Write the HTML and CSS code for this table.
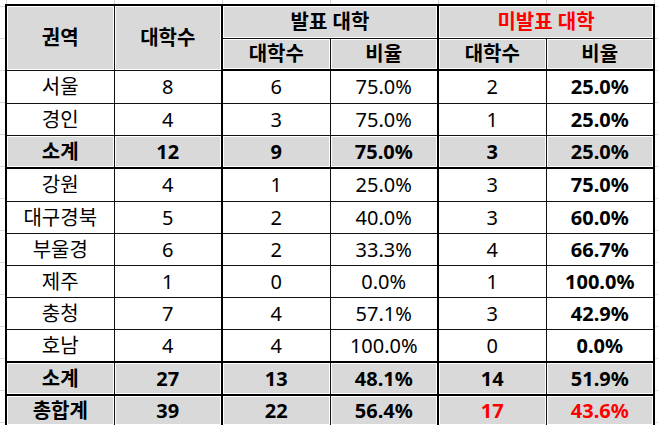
FILE: index.html
```html
<!DOCTYPE html>
<html lang="ko">
<head>
<meta charset="utf-8">
<title>권역별 대학 발표 현황</title>
<link rel="stylesheet" href="styles.css">
</head>
<body>
<div class="sheet">
<table class="stats">
  <colgroup>
    <col class="col"><col class="col"><col class="col"><col class="col"><col class="col"><col class="col">
  </colgroup>
  <thead>
    <tr class="h1">
      <th rowspan="2">권역</th>
      <th rowspan="2" class="thick-r">대학수</th>
      <th colspan="2" class="thick-r">발표 대학</th>
      <th colspan="2" class="red">미발표 대학</th>
    </tr>
    <tr class="h2">
      <th>대학수</th>
      <th class="thick-r">비율</th>
      <th>대학수</th>
      <th>비율</th>
    </tr>
  </thead>
  <tbody>
    <tr class="r33"><td>서울</td><td>8</td><td>6</td><td>75.0%</td><td>2</td><td>25.0%</td></tr>
    <tr><td>경인</td><td>4</td><td>3</td><td>75.0%</td><td>1</td><td>25.0%</td></tr>
    <tr class="sub thick-b"><td>소계</td><td>12</td><td>9</td><td>75.0%</td><td>3</td><td>25.0%</td></tr>
    <tr class="r33"><td>강원</td><td>4</td><td>1</td><td>25.0%</td><td>3</td><td>75.0%</td></tr>
    <tr><td>대구경북</td><td>5</td><td>2</td><td>40.0%</td><td>3</td><td>60.0%</td></tr>
    <tr><td>부울경</td><td>6</td><td>2</td><td>33.3%</td><td>4</td><td>66.7%</td></tr>
    <tr><td>제주</td><td>1</td><td>0</td><td>0.0%</td><td>1</td><td>100.0%</td></tr>
    <tr><td>충청</td><td>7</td><td>4</td><td>57.1%</td><td>3</td><td>42.9%</td></tr>
    <tr class="thick-b"><td>호남</td><td>4</td><td>4</td><td>100.0%</td><td>0</td><td>0.0%</td></tr>
    <tr class="sub thick-b"><td>소계</td><td>27</td><td>13</td><td>48.1%</td><td>14</td><td>51.9%</td></tr>
    <tr class="sub last"><td>총합계</td><td>39</td><td>22</td><td>56.4%</td><td class="red">17</td><td class="red">43.6%</td></tr>
  </tbody>
</table>
</div>
</body>
</html>
```

FILE: styles.css
```css
html, body {
  margin: 0;
  padding: 0;
}

body {
  width: 658px;
  height: 425px;
  overflow: hidden;
  background-color: #fff;
  background-image:
    repeating-linear-gradient(90deg, #d8d8d8 0 1px, transparent 1px 108px),
    repeating-linear-gradient(180deg, #d8d8d8 0 1px, transparent 1px 32px);
  background-position: 6px 0, 0 6px;
  font-family: "Noto Sans", "Noto Sans CJK KR", sans-serif;
  color: #000;
}

.sheet {
  padding: 4px 0 0 5px;
}

.stats {
  border-collapse: collapse;
  table-layout: fixed;
  width: 649px;
  background: #fff;
  border: 2px solid #000;
  font-size: 20px;
}

.col {
  width: 108px;
}

.stats th,
.stats td {
  border: 1px solid #111;
  padding: 0;
  text-align: center;
  vertical-align: middle;
  line-height: 24px;
  white-space: nowrap;
}

.stats th {
  font-weight: 700;
  background: #d9d9d9;
  box-shadow: inset 0 0 0 1px #fff;
}

.h1 th {
  height: 32px;
}

.h2 th {
  height: 30px;
  border-bottom: 2px solid #000;
}

.stats td {
  height: 31px;
}

.stats .r33 td {
  height: 32px;
}

.stats .last td {
  height: 29px;
  border-bottom: 2px solid #000;
}

.stats td:nth-child(2),
.stats td:nth-child(4),
.stats th.thick-r {
  border-right: 2px solid #000;
}

.stats td:nth-child(6) {
  font-weight: 700;
}

.stats tr.thick-b td {
  border-bottom: 2px solid #000;
}

.stats tr.sub td {
  background: #d9d9d9;
  font-weight: 700;
  box-shadow: inset 0 0 0 1px #fff;
}

.red {
  color: #ff0000;
}
```
